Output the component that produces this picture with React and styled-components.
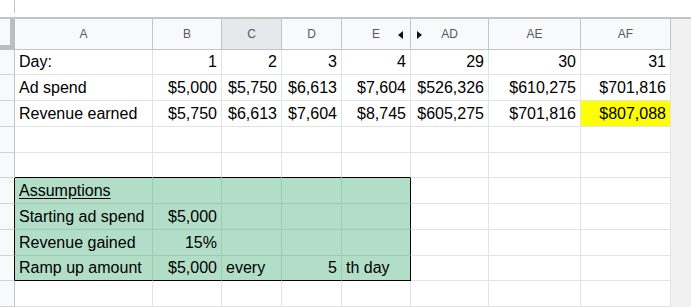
import React from "react";
import styled, { createGlobalStyle } from "styled-components";

const GlobalStyle = createGlobalStyle`
  body {
    margin: 0;
    background: #ffffff;
    font-family: "Liberation Sans", Arial, sans-serif;
  }
`;

const COLS = "15px 138px 69px 60px 60px 69px 78px 92px 90px 1fr";
const GREEN = "#b2ddc7";
const GREEN_LINE = "#9ccab3";
const GRID = "#e2e3e3";
const HEAD_LINE = "#c4c4c4";

const headers = [
  { label: "A" },
  { label: "B" },
  { label: "C", active: true },
  { label: "D" },
  { label: "E", hideLeft: true },
  { label: "AD", hideRight: true },
  { label: "AE" },
  { label: "AF" },
];

const dataRows = [
  ["Day:", "1", "2", "3", "4", "29", "30", "31"],
  ["Ad spend", "$5,000", "$5,750", "$6,613", "$7,604", "$526,326", "$610,275", "$701,816"],
  ["Revenue earned", "$5,750", "$6,613", "$7,604", "$8,745", "$605,275", "$701,816", "$807,088"],
];

// the assumptions block, columns A..E, value + alignment
const assumptions = [
  [{ v: "Assumptions", u: true }, {}, {}, {}, {}],
  [{ v: "Starting ad spend" }, { v: "$5,000", r: true }, {}, {}, {}],
  [{ v: "Revenue gained" }, { v: "15%", r: true }, {}, {}, {}],
  [{ v: "Ramp up amount" }, { v: "$5,000", r: true }, { v: "every" }, { v: "5", r: true }, { v: "th day" }],
];

const Sheet = styled.div`
  width: 691px;
  height: 307px;
  overflow: hidden;
  display: flex;
  flex-direction: column;
`;

const TopBar = styled.div`
  height: 17px;
  border-bottom: 2px solid ${HEAD_LINE};
  display: flex;
`;

const FxDivider = styled.div`
  width: 1px;
  height: 13px;
  margin-left: 14px;
  background: ${HEAD_LINE};
`;

const Row = styled.div`
  display: grid;
  grid-template-columns: ${COLS};
  height: ${(p) => p.$h || 26}px;
`;

const Corner = styled.div`
  box-sizing: border-box;
  background: #f8f9fa;
  border-right: 5px solid #bdbdbd;
  border-bottom: 5px solid #bdbdbd;
`;

const ColHead = styled.div`
  position: relative;
  box-sizing: border-box;
  display: flex;
  align-items: center;
  justify-content: center;
  background: ${(p) => (p.$active ? "#e6e8eb" : "#f8f9fa")};
  border-right: 1px solid ${HEAD_LINE};
  border-bottom: 1px solid ${HEAD_LINE};
  color: #555a60;
  font-size: 12px;
`;

const HideMark = styled.svg`
  position: absolute;
  top: 12px;
  ${(p) => (p.$side === "left" ? "right: 7px;" : "left: 6px;")}
`;

const RowHead = styled.div`
  box-sizing: border-box;
  background: #f8f9fa;
  border-right: 1px solid ${(p) => p.$rb || HEAD_LINE};
  border-bottom: 1px solid #d4d4d4;
`;

const Cell = styled.div`
  box-sizing: border-box;
  display: flex;
  align-items: center;
  justify-content: ${(p) => (p.$right ? "flex-end" : "flex-start")};
  padding: 1px 4px 0 4px;
  background: ${(p) => p.$bg || "#ffffff"};
  border-right: 1px solid ${(p) => p.$rb || GRID};
  border-bottom: 1px solid ${(p) => p.$bb || GRID};
  color: #000;
  font-size: 16px;
  white-space: nowrap;
  overflow: hidden;
  text-decoration: ${(p) => (p.$underline ? "underline" : "none")};
  text-underline-offset: 2px;
`;

const Gutter = styled.div`
  background: #f1f1f1;
`;

const Arrow = ({ side }) => (
  <HideMark $side={side} width="5" height="8" viewBox="0 0 5 8">
    {side === "left" ? (
      <polygon points="5,0 5,8 0,4" fill="#111" />
    ) : (
      <polygon points="0,0 0,8 5,4" fill="#111" />
    )}
  </HideMark>
);

const HeaderRow = () => (
  <Row $h={31}>
    <Corner />
    {headers.map((h) => (
      <ColHead key={h.label} $active={h.active}>
        {h.label}
        {h.hideLeft && <Arrow side="left" />}
        {h.hideRight && <Arrow side="right" />}
      </ColHead>
    ))}
    <Gutter />
  </Row>
);

const EmptyRow = ({ bottom }) => (
  <Row>
    <RowHead />
    {headers.map((h, i) => (
      <Cell key={h.label} $bb={bottom && i < 5 ? "#000" : undefined} />
    ))}
    <Gutter />
  </Row>
);

export default function App() {
  return (
    <>
      <GlobalStyle />
      <Sheet>
        <TopBar>
          <FxDivider />
        </TopBar>
        <HeaderRow />

        {dataRows.map((row, r) => (
          <Row key={r}>
            <RowHead />
            {row.map((v, c) => (
              <Cell
                key={c}
                $right={c > 0}
                $bg={r === 2 && c === 7 ? "#ffff00" : undefined}
              >
                {v}
              </Cell>
            ))}
            <Gutter />
          </Row>
        ))}

        <EmptyRow />
        <EmptyRow bottom />

        {assumptions.map((row, r) => {
          const last = r === assumptions.length - 1;
          return (
            <Row key={"a" + r}>
              <RowHead $rb="#000" />
              {row.map((cell, c) => (
                <Cell
                  key={c}
                  $bg={GREEN}
                  $right={cell.r}
                  $underline={cell.u}
                  $rb={c === 4 ? "#000" : GREEN_LINE}
                  $bb={last ? "#000" : GREEN_LINE}
                >
                  {cell.v}
                </Cell>
              ))}
              <Cell />
              <Cell />
              <Cell />
              <Gutter />
            </Row>
          );
        })}

        <EmptyRow />
      </Sheet>
    </>
  );
}
